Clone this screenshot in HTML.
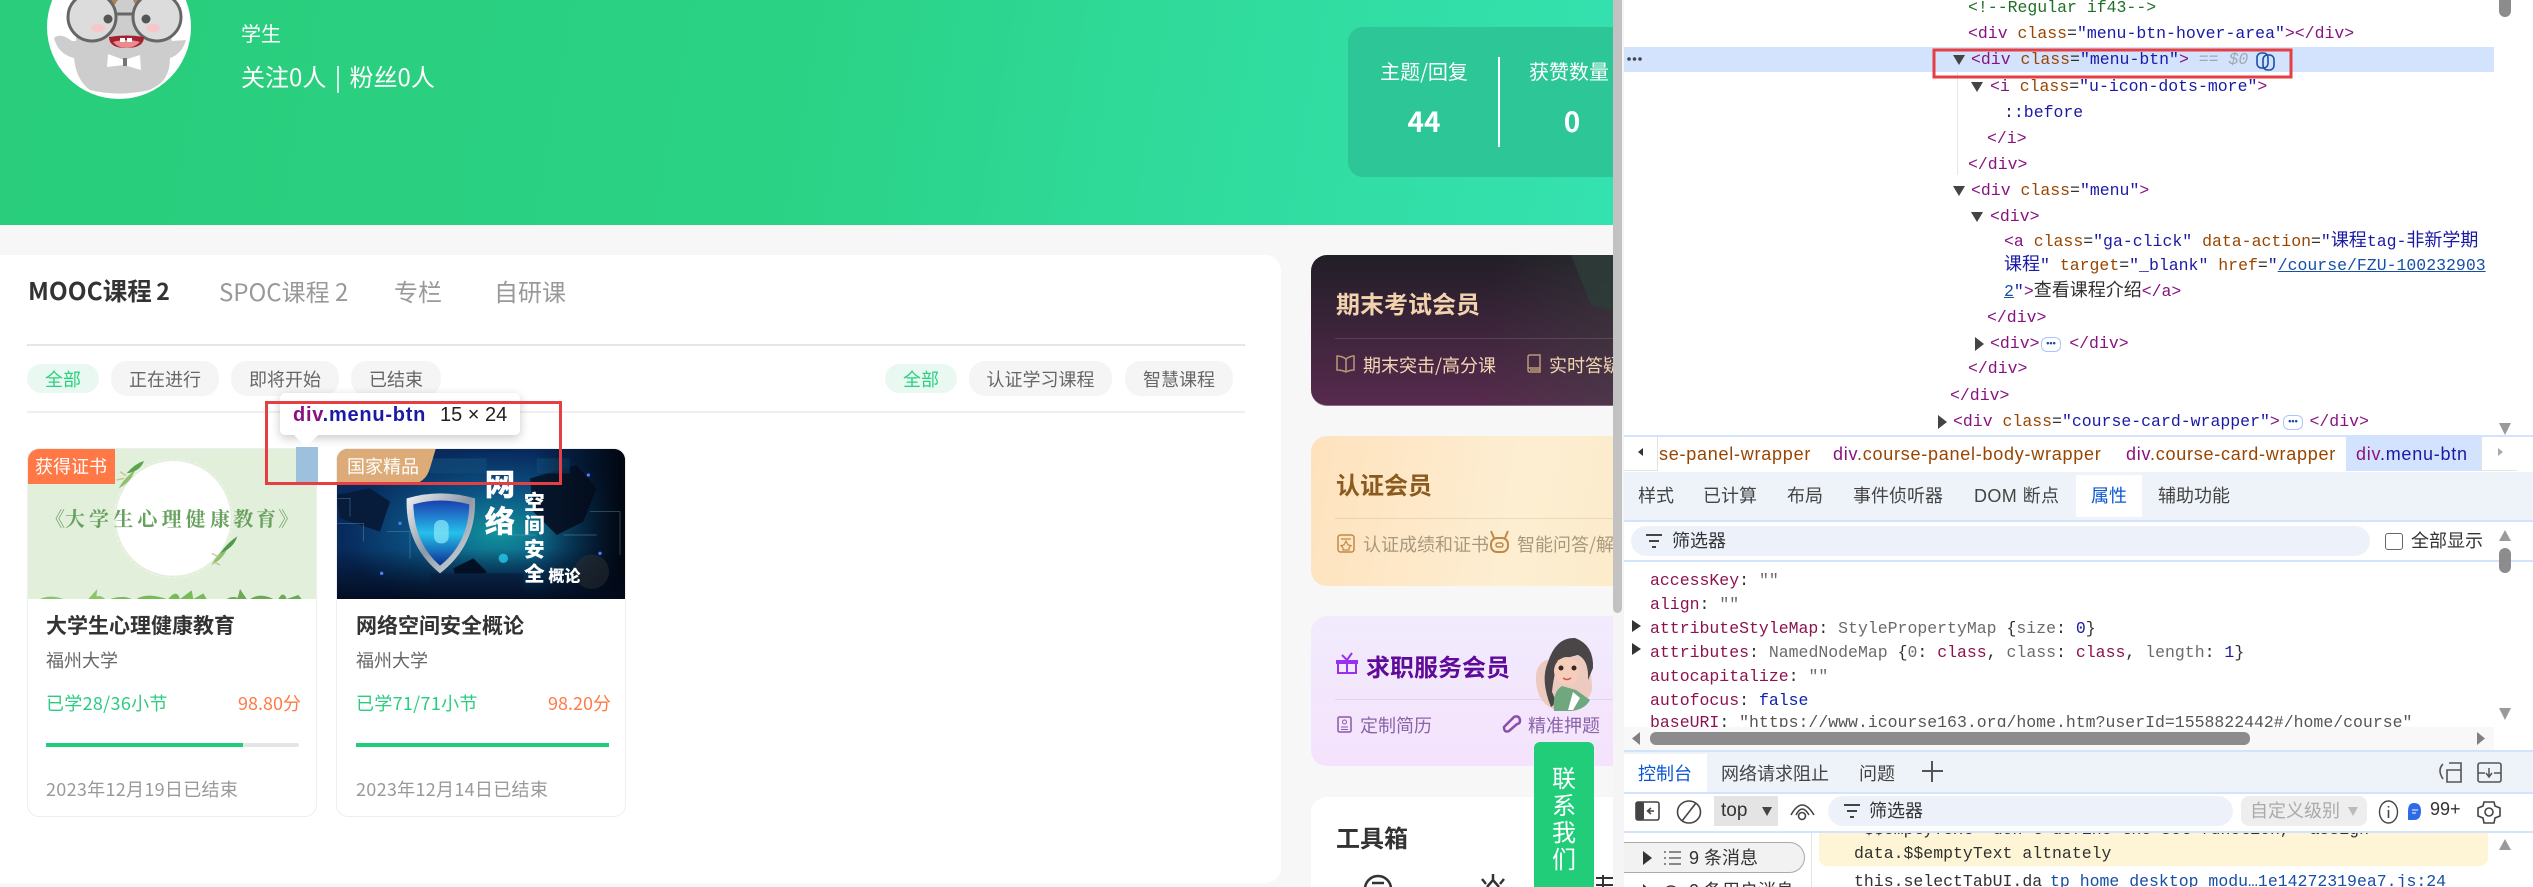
<!DOCTYPE html>
<html lang="zh-CN"><head><meta charset="utf-8"><title>课程</title>
<style>
*{box-sizing:border-box;margin:0;padding:0}
html,body{width:2533px;height:887px;overflow:hidden;background:#fff}
body{position:relative;font-family:"Noto Sans CJK SC","Liberation Sans",sans-serif}
.a{position:absolute}
.t{position:absolute;white-space:nowrap;line-height:1}
.p{position:absolute;display:flex;align-items:center;justify-content:center;font-size:18px;white-space:nowrap;border-radius:16px;background:#f5f5f5;color:#666;height:35px;top:361px}
.p.on{background:#e9f9f2;color:#2ad07f;height:29px;top:364px}
.card{position:absolute;top:448px;width:290px;height:369px;background:#fff;border:1px solid #eee;border-radius:12px;overflow:hidden}
.d{font-family:"Liberation Sans","Noto Sans CJK SC",sans-serif;color:#444}
.m{position:absolute;font-family:"Liberation Mono","Noto Sans CJK SC",monospace;font-size:16.5px;line-height:20px;white-space:pre;color:#303030}
.m i{font-style:normal;color:#881280}
.m b{font-weight:400;color:#994500}
.m u{text-decoration:none;color:#1a1aa6}
.m em{font-style:normal;font-size:18px}
.n{font-style:normal;color:#8b1350}
.g{color:#6b6b6b}
.e{position:absolute;width:20px;height:15px;border:1px solid #a8c7fa;border-radius:6px;background:#fff;color:#174ea6;font:bold 9px/10px "Liberation Sans",sans-serif;text-align:center;letter-spacing:0}
.ln{position:absolute;background:#d3e3fd;height:2px;left:1624px;width:909px}
</style></head><body>

<!-- page area -->
<div class="a" style="left:0;top:0;width:1613px;height:887px;overflow:hidden;background:#f7f7f7">
  <div class="a" style="left:0;top:0;width:1613px;height:225px;background:linear-gradient(100deg,#29cd7b 0%,#2ad284 48%,#31dca0 78%,#34e2b0 100%)"></div>

  <svg class="a" style="left:0;top:0" width="210" height="110" viewBox="0 0 210 110">
    <defs><clipPath id="av"><circle cx="119" cy="27" r="70"/></clipPath></defs>
    <circle cx="119" cy="27" r="72" fill="#fff"/>
    <g clip-path="url(#av)">
      <path d="M54 38Q60 32 72 41L76 41Q80 -6 118 -8Q160 -6 172 41L186 40Q182 54 170 58Q170 82 150 90Q118 97 90 90Q76 80 74 58Q58 54 54 38Z" fill="#cdcdcd"/>
      <path d="M104 -2L113 7L118 0ZM136 6L150 -2L132 -2Z" fill="#a88654"/>
      <circle cx="92" cy="17" r="24" fill="#dcdcdc" stroke="#666" stroke-width="3"/>
      <circle cx="157" cy="17" r="24" fill="#dcdcdc" stroke="#666" stroke-width="3"/>
      <path d="M116 14H133" stroke="#666" stroke-width="3"/>
      <circle cx="108" cy="19" r="4.5" fill="#555"/><circle cx="146" cy="19" r="4.5" fill="#555"/>
      <ellipse cx="98" cy="28" rx="7" ry="4" fill="#f6c6c8"/><ellipse cx="153" cy="28" rx="7" ry="4" fill="#f6c6c8"/>
      <path d="M109 37Q126 34 144 37Q144 48 126 48Q109 48 109 37Z" fill="#a2232f"/>
      <path d="M113 42Q126 38 140 42Q134 48 126 48Q118 48 113 42Z" fill="#ea8b8f"/>
      <rect x="120" y="38" width="5" height="4" fill="#fff"/><rect x="127" y="38" width="5" height="4" fill="#fff"/>
      <path d="M108 54L124 60L140 55L141 70L124 65L107 67Z" fill="#fff"/>
      <rect x="123" y="58" width="4" height="8" fill="#777"/>
    </g>
  </svg>
  <div class="t" style="left:241px;top:23px;font-size:20px;color:#fff">学生</div>
  <div class="t" style="left:241px;top:64px;font-size:24px;color:#fff;word-spacing:3px">关注0人 | 粉丝0人</div>

  <div class="a" style="left:1348px;top:27px;width:300px;height:150px;background:#2dc797;border-radius:15px"></div>
  <div class="t" style="left:1349px;width:150px;top:61px;text-align:center;font-size:20px;color:#fff">主题/回复</div>
  <div class="t" style="left:1349px;width:150px;top:107px;text-align:center;font-size:28px;font-weight:700;color:#fff">44</div>
  <div class="a" style="left:1498px;top:57px;width:2px;height:90px;background:#fff"></div>
  <div class="t" style="left:1529px;top:61px;font-size:20px;color:#fff">获赞数量</div>
  <div class="t" style="left:1500px;width:144px;top:107px;text-align:center;font-size:28px;font-weight:700;color:#fff">0</div>

  <!-- white panel -->
  <div class="a" style="left:0;top:255px;width:1281px;height:628px;background:#fff;border-radius:0 16px 16px 0"></div>
  <div class="t" style="left:28px;top:279px;font-size:24.5px;font-weight:700;color:#333;word-spacing:-1px">MOOC课程 <span style="font-size:23px">2</span></div>
  <div class="t" style="left:219px;top:279px;font-size:24px;color:#999">SPOC课程 2</div>
  <div class="t" style="left:394px;top:279px;font-size:24px;color:#999">专栏</div>
  <div class="t" style="left:494px;top:279px;font-size:24px;color:#999">自研课</div>
  <div class="a" style="left:27px;top:344px;width:1218px;height:1.5px;background:#e6e6e6"></div>
  <div class="a" style="left:27px;top:411px;width:1218px;height:1.5px;background:#efefef"></div>

  <div class="p on" style="left:27px;width:72px">全部</div>
  <div class="p" style="left:111px;width:108px">正在进行</div>
  <div class="p" style="left:231px;width:108px">即将开始</div>
  <div class="p" style="left:351px;width:90px">已结束</div>
  <div class="p on" style="left:885px;width:72px">全部</div>
  <div class="p" style="left:969px;width:143px">认证学习课程</div>
  <div class="p" style="left:1125px;width:108px">智慧课程</div>

  <!-- course card 1 -->
  <div class="card" style="left:27px">
    <svg class="a" style="left:-8px;top:-4px" width="300" height="160" viewBox="0 0 900 480">
      <rect width="900" height="480" fill="#e2efdb"/>
      <circle cx="460" cy="220" r="178" fill="none" stroke="#f4f9f0" stroke-width="2" stroke-dasharray="10 8"/>
      <circle cx="460" cy="220" r="172" fill="#fff"/>
      <text y="243" font-family="Noto Serif CJK SC,serif" font-weight="700" font-size="60" fill="#68a15f" x="75 135 207 280 352 425 497 570 640 708 775">《大学生心理健康教育》</text>
      <g fill="#8fc071">
        <path d="M296 130Q312 100 345 75Q335 110 296 130Z"/>
        <path d="M574 360Q590 330 625 300Q615 340 574 360Z"/>
        <path d="M320 85Q345 55 372 48Q360 80 320 85Z" fill="#5aa550"/>
        <path d="M600 325Q625 290 652 274Q640 310 600 325Z" fill="#4f9a4a"/>
      </g>
      <path d="M312 100L290 105M318 92L300 80M580 350L600 360M595 335L575 325" stroke="#c0c68a" stroke-width="4"/>
      <g fill="#8cc46a">
        <path d="M60 462Q90 448 130 462ZM205 462L232 432L228 462ZM205 462Q240 445 255 462Z"/>
        <path d="M270 462Q310 450 335 462ZM350 462Q380 442 440 462ZM445 462Q470 430 480 462L515 436L520 462L550 445L560 462Z" fill="#76bb55"/>
        <path d="M620 462Q640 450 660 462ZM652 462L660 432L680 462ZM690 462Q720 442 760 462ZM775 462Q790 435 800 462L835 450L845 462Z" fill="#6aaa55"/>
      </g>
      <rect y="462" width="900" height="18" fill="#fff"/>
    </svg>
    <div class="a" style="left:0;top:0;width:87px;height:35px;background:#ff7845;color:#fff;font-size:18px;line-height:34px;padding-left:7px">获得证书</div>
    <div class="t" style="left:18px;top:166px;font-size:21px;font-weight:700;color:#333">大学生心理健康教育</div>
    <div class="t" style="left:18px;top:202px;font-size:18px;color:#666">福州大学</div>
    <div class="t" style="left:18px;top:245px;font-size:18px;color:#2acd7e;letter-spacing:.3px">已学28/36小节</div>
    <div class="t" style="right:15px;top:245px;font-size:18px;color:#ff7a45">98.80分</div>
    <div class="a" style="left:18px;top:294px;width:253px;height:4px;background:#e5e5e5;border-radius:2px"></div>
    <div class="a" style="left:18px;top:294px;width:197px;height:4px;background:#22cd7a"></div>
    <div class="t" style="left:18px;top:331px;font-size:18px;color:#999;letter-spacing:.3px">2023年12月19日已结束</div>
  </div>

  <!-- course card 2 -->
  <div class="card" style="left:336px">
    <svg class="a" style="left:-7px;top:-4px" width="300" height="160" viewBox="0 0 900 480">
      <defs>
        <radialGradient id="gg" cx="56%" cy="55%" r="52%"><stop offset="0" stop-color="#12939c"/><stop offset=".5" stop-color="#0b5484"/><stop offset="1" stop-color="#082a5c"/></radialGradient>
        <linearGradient id="sh" x1="0" x2="0" y1="0" y2="1"><stop offset="0" stop-color="#1a3fb0"/><stop offset=".5" stop-color="#26c0ec"/><stop offset="1" stop-color="#0b2f92"/></linearGradient>
        <linearGradient id="sil" x1="0" x2="1" y1="0" y2="1"><stop offset="0" stop-color="#f2f4f6"/><stop offset=".5" stop-color="#8d98a6"/><stop offset="1" stop-color="#e6eaee"/></linearGradient>
        <linearGradient id="fade" x1="0" x2="1" y1="0" y2="0"><stop offset=".68" stop-color="#020812" stop-opacity="0"/><stop offset=".97" stop-color="#020812"/></linearGradient>
        <linearGradient id="fb" x1="0" x2="0" y1="0" y2="1"><stop offset=".65" stop-color="#020812" stop-opacity="0"/><stop offset="1" stop-color="#020a1e"/></linearGradient>
      </defs>
      <rect width="900" height="480" fill="url(#gg)"/>
      <path d="M20 150L120 130L180 170L150 260L90 240L30 220Z" fill="#071c3a"/>
      <path d="M600 100L740 60L800 130L760 230L680 270L610 200Z" fill="#07182f"/>
      <path d="M370 370L430 340L470 380L440 420L380 410Z" fill="#05142a"/>
      <path d="M300 40H470V85H300ZM620 40H720V85H620Z" fill="#114a78" opacity=".7"/>
      <rect x="300" y="385" width="280" height="75" fill="#0e3768"/>
      <rect width="900" height="480" fill="url(#fade)"/><rect width="900" height="480" fill="url(#fb)"/>
      <path d="M22 235H100V290M170 260H240V340M780 200H870V330M540 270H620M22 160H60V215M700 270H800" fill="none" stroke="#6a9dbd" stroke-width="2" opacity=".6"/>
      <circle cx="520" cy="340" r="14" fill="#25c8ee" opacity=".8"/>
      <circle cx="775" cy="90" r="5" fill="#4c7cff"/><circle cx="810" cy="325" r="5" fill="#4c7cff"/><circle cx="210" cy="235" r="5" fill="#4c7cff"/><circle cx="155" cy="385" r="5" fill="#4c7cff"/>
      <path d="M230 160Q330 130 435 160Q440 300 330 385Q225 300 230 160Z" fill="url(#sil)"/>
      <path d="M250 178Q330 155 418 178Q415 295 330 362Q252 295 250 178Z" fill="url(#sh)"/>
      <rect x="312" y="225" width="44" height="70" rx="20" fill="#86e6f7" opacity=".75"/>
      <circle cx="785" cy="380" r="52" fill="#333" opacity=".45"/>
      <g font-family="Noto Sans CJK SC,sans-serif" font-weight="900" fill="#fff">
        <text x="464" y="152" font-size="92">网</text>
        <text x="464" y="262" font-size="92">络</text>
        <text x="582" y="194" font-size="62">空</text>
        <text x="582" y="262" font-size="62">间</text>
        <text x="582" y="335" font-size="62">安</text>
        <text x="582" y="408" font-size="62">全</text>
        <text x="655" y="410" font-size="48">概论</text>
      </g>
      <rect y="462" width="900" height="18" fill="#fff"/>
    </svg>
    <svg class="a" style="left:0;top:-1px" width="110" height="40"><path d="M0 0H99L93 20Q89 34 76 36H0Z" fill="#dcab78"/></svg>
    <div class="t" style="left:10px;top:8px;font-size:18px;color:#fff">国家精品</div>
    <div class="t" style="left:19px;top:166px;font-size:21px;font-weight:700;color:#333">网络空间安全概论</div>
    <div class="t" style="left:19px;top:202px;font-size:18px;color:#666">福州大学</div>
    <div class="t" style="left:19px;top:245px;font-size:18px;color:#2acd7e;letter-spacing:.3px">已学71/71小节</div>
    <div class="t" style="right:14px;top:245px;font-size:18px;color:#ff7a45">98.20分</div>
    <div class="a" style="left:19px;top:294px;width:253px;height:4px;background:#22cd7a"></div>
    <div class="t" style="left:19px;top:331px;font-size:18px;color:#999;letter-spacing:.3px">2023年12月14日已结束</div>
  </div>

  <!-- inspector overlay -->
  <div class="a" style="left:296px;top:447px;width:22px;height:36px;background:#9dc1dc"></div>
  <div class="a" style="left:280px;top:393px;width:240px;height:42px;background:#fff;border-radius:5px;box-shadow:0 3px 10px rgba(0,0,0,.22)"></div>
  <svg class="a" style="left:294px;top:434px" width="26" height="14"><path d="M0 1H24L12 13Z" fill="#fff"/></svg>
  <div class="t d" style="left:293px;top:405px;font-size:20px;font-weight:700;color:#1a1aa6;line-height:20px;letter-spacing:.75px"><span style="color:#881280">div</span>.menu-btn</div>
  <div class="t d" style="left:440px;top:405px;font-size:20px;color:#222;line-height:20px">15 × 24</div>
  <div class="a" style="left:265px;top:401px;width:297px;height:84px;border:3px solid #e63f43"></div>

  <!-- right column -->
  <div class="a" style="left:1311px;top:255px;width:340px;height:151px;border-radius:16px;background:linear-gradient(180deg,#211e27,#582a4e);border-bottom:1px solid #8a6a88;overflow:hidden">
    <div class="a" style="left:0;top:0;width:340px;height:151px;background:linear-gradient(100deg,rgba(60,70,60,0) 50%,rgba(60,75,65,.45) 100%)"></div>
    <svg class="a" style="left:260px;top:0" width="60" height="60"><path d="M0 0H60V60L20 50Z" fill="#2d3d38" opacity=".8"/></svg>
  </div>
  <div class="t" style="left:1336px;top:291px;font-size:24px;font-weight:700;color:#f3d3ad">期末考试会员</div>
  <div class="a" style="left:1335px;top:338px;width:280px;height:1px;background:rgba(255,255,255,.12)"></div>
  <div class="t" style="left:1363px;top:356px;font-size:18px;color:#f2d7b3">期末突击/高分课</div>
  <div class="t" style="left:1549px;top:356px;font-size:18px;color:#f2d7b3">实时答疑</div>

  <div class="a" style="left:1311px;top:436px;width:340px;height:150px;border-radius:16px;background:linear-gradient(100deg,#fee2bd,#fdeed2 60%,#fcebc9)"></div>
  <div class="t" style="left:1336px;top:472px;font-size:24px;font-weight:700;color:#8a5a1e">认证会员</div>
  <div class="a" style="left:1335px;top:518px;width:280px;height:1px;background:rgba(150,110,60,.16)"></div>
  <div class="t" style="left:1363px;top:535px;font-size:18px;color:#a8987e">认证成绩和证书</div>
  <div class="t" style="left:1517px;top:535px;font-size:18px;color:#a8987e">智能问答/解析</div>

  <div class="a" style="left:1311px;top:616px;width:340px;height:150px;border-radius:16px;background:linear-gradient(180deg,#f1ebfd,#f5e2fc)"></div>
  <div class="t" style="left:1366px;top:654px;font-size:24px;font-weight:700;color:#5f0a99">求职服务会员</div>
  <div class="a" style="left:1335px;top:699px;width:280px;height:1px;background:#e2d3ef"></div>
  <div class="t" style="left:1360px;top:716px;font-size:18px;color:#8a63a8">定制简历</div>
  <div class="t" style="left:1528px;top:716px;font-size:18px;color:#8a63a8">精准押题</div>

  <div class="a" style="left:1311px;top:797px;width:340px;height:120px;border-radius:16px;background:#fff"></div>
  <div class="t" style="left:1336px;top:825px;font-size:24px;font-weight:700;color:#333">工具箱</div>

  <svg class="a" style="left:0;top:0" width="1613" height="887" fill="none">
    <!-- book -->
    <path d="M1346 359Q1342 356 1337 356V370Q1342 370 1346 372Q1350 370 1354 370V356Q1350 356 1346 359ZM1346 359V372" stroke="#b89a78" stroke-width="1.5"/>
    <path d="M1528 370V357Q1528 355 1530 355H1540V372H1530Q1528 372 1528 370ZM1528 368H1540M1530 370H1540" stroke="#b89a78" stroke-width="1.5"/>
    <!-- cert -->
    <rect x="1338" y="535" width="16" height="17" rx="2.5" stroke="#c08a45" stroke-width="1.5"/>
    <path d="M1341 539H1351M1346 541L1348 545L1351 545.500L1349 548V550H1343V548L1341 545.500L1344 545Z" stroke="#c08a45" stroke-width="1.2"/>
    <!-- robot -->
    <rect x="1491" y="538" width="17" height="14" rx="6" stroke="#c08a45" stroke-width="2"/>
    <rect x="1496" y="543" width="7" height="4" rx="2" stroke="#c08a45" stroke-width="1.5"/>
    <path d="M1494 538L1491 531M1505 538L1508 531" stroke="#c08a45" stroke-width="2"/>
    <!-- gift -->
    <path d="M1337 661H1357V663H1337ZM1338 663V673H1356V663M1347 663V673M1342 655L1347 660L1352 653" stroke="#9a2ff0" stroke-width="2"/>
    <!-- resume -->
    <rect x="1338" y="717" width="13" height="15" rx="1.500" stroke="#8a5aa8" stroke-width="1.5"/>
    <circle cx="1344.500" cy="722" r="2" stroke="#8a5aa8"/><path d="M1341 727H1348M1341 729.500H1348" stroke="#8a5aa8"/>
    <!-- scroll -->
    <path d="M1504 727L1514 717Q1519 715 1520 720Q1520 724 1517 724L1509 731Q1504 733 1504 727Z" stroke="#8a50a8" stroke-width="2.5"/>
    <!-- tools icons -->
    <circle cx="1378" cy="889" r="13" stroke="#333" stroke-width="2.5"/><path d="M1372 883H1384" stroke="#333" stroke-width="2.5"/>
    <path d="M1493 874V881M1482 879L1486 884M1504 879L1500 884M1487 887L1493 880L1499 887" stroke="#333" stroke-width="2.5"/>
    <path d="M1596 878H1613M1596 885H1613M1603 875V887" stroke="#333" stroke-width="2"/>
    <!-- girl -->
    <path d="M1546 660Q1535 665 1536 680Q1537 706 1560 711Q1585 712 1592 690Q1592 670 1585 655Z" fill="#eccac0"/>
    <path d="M1548 662Q1556 637 1575 638Q1594 645 1593 668L1588 680Q1589 660 1578 655L1558 660Q1553 680 1552 692Q1558 703 1551 707Q1540 680 1548 662Z" fill="#4a4546"/>
    <ellipse cx="1567" cy="671" rx="13" ry="14" fill="#f5cdbb"/>
    <circle cx="1561" cy="668" r="2.500" fill="#3a2622"/><circle cx="1574" cy="668" r="2.500" fill="#3a2622"/>
    <path d="M1563 678Q1567 681 1571 678" stroke="#d4545a" stroke-width="1.5"/>
    <path d="M1554 711Q1552 692 1562 686L1576 690L1590 700Q1584 711 1568 711Z" fill="#6fa87f"/>
    <path d="M1573 692L1580 698L1573 710H1568Z" fill="#fff"/>
  </svg>

  <div class="a" style="left:1534px;top:742px;width:60px;height:160px;background:#22cd7a;border-radius:6px"></div>
  <div class="a" style="left:1534px;top:763px;width:60px;text-align:center;color:#fff;font-size:24px;line-height:27px;font-family:'Noto Sans CJK SC',sans-serif">联<br>系<br>我<br>们</div>
</div>

<!-- page scrollbar -->
<div class="a" style="left:1613px;top:0;width:11px;height:887px;background:#f5f5f5"></div>
<div class="a" style="left:1613px;top:0;width:9px;height:613px;background:#c2c2c2;border-radius:0 0 5px 5px"></div>

<!-- devtools -->
<div class="a" style="left:1624px;top:0;width:909px;height:887px;background:#fff;overflow:hidden"></div>
<div class="a" style="left:1624px;top:47px;width:870px;height:25px;background:#d3e3fd"></div>
<div class="a" style="left:1957px;top:72px;width:1px;height:103px;background:#dfe7f3"></div>

<div class="m" style="left:1968px;top:-2px;color:#236e25">&lt;!--Regular if43--&gt;</div>
<div class="m" style="left:1968px;top:24px"><i>&lt;div</i> <b>class</b>=<u>"menu-btn-hover-area"</u><i>&gt;&lt;/div&gt;</i></div>
<div class="m" style="left:1971px;top:50px"><i>&lt;div</i> <b>class</b>=<u>"menu-btn"</u><i>&gt;</i> <span style="color:#a0a8b4;font-style:italic">== $0</span></div>
<div class="m" style="left:1990px;top:77px"><i>&lt;i</i> <b>class</b>=<u>"u-icon-dots-more"</u><i>&gt;</i></div>
<div class="m" style="left:2004px;top:103px;color:#1a1aa6">::before</div>
<div class="m" style="left:1987px;top:129px"><i>&lt;/i&gt;</i></div>
<div class="m" style="left:1968px;top:155px"><i>&lt;/div&gt;</i></div>
<div class="m" style="left:1971px;top:181px"><i>&lt;div</i> <b>class</b>=<u>"menu"</u><i>&gt;</i></div>
<div class="m" style="left:1990px;top:207px"><i>&lt;div&gt;</i></div>
<div class="m" style="left:2004px;top:232px"><i>&lt;a</i> <b>class</b>=<u>"ga-click"</u> <b>data-action</b>=<u>"<em>课程</em>tag-<em>非新学期</em></u></div>
<div class="m" style="left:2004px;top:256px"><u><em>课程</em>"</u> <b>target</b>=<u>"_blank"</u> <b>href</b>=<u>"</u><span style="color:#174ea6;text-decoration:underline">/course/FZU-100232903</span></div>
<div class="m" style="left:2004px;top:282px"><span style="color:#174ea6;text-decoration:underline">2</span><u>"</u><i>&gt;</i><em>查看课程介绍</em><i>&lt;/a&gt;</i></div>
<div class="m" style="left:1987px;top:308px"><i>&lt;/div&gt;</i></div>
<div class="m" style="left:1990px;top:334px"><i>&lt;div&gt;</i>   <i>&lt;/div&gt;</i></div>
<div class="e" style="left:2041px;top:337px">•••</div>
<div class="m" style="left:1968px;top:359px"><i>&lt;/div&gt;</i></div>
<div class="m" style="left:1950px;top:386px"><i>&lt;/div&gt;</i></div>
<div class="m" style="left:1953px;top:412px"><i>&lt;div</i> <b>class</b>=<u>"course-card-wrapper"</u><i>&gt;</i>   <i>&lt;/div&gt;</i></div>
<div class="e" style="left:2283px;top:415px">•••</div>

<!-- breadcrumb -->
<div class="ln" style="top:435px"></div>
<div class="a" style="left:2346px;top:437px;width:135px;height:34px;background:#d3e3fd"></div>
<div class="a" style="left:1624px;top:437px;width:34px;height:34px;border-right:1px solid #e3e3e3;border-bottom:1px solid #e3e3e3"></div>
<div class="a" style="left:2481px;top:437px;width:36px;height:34px;border-left:1px solid #e3e3e3;border-bottom:1px solid #e3e3e3"></div>
<div class="t d" style="left:1659px;top:444px;font-size:18px;line-height:20px;letter-spacing:.75px;color:#994500">se-panel-wrapper</div>
<div class="t d" style="left:1833px;top:444px;font-size:18px;line-height:20px;letter-spacing:.75px;color:#994500"><span style="color:#881280">div</span>.course-panel-body-wrapper</div>
<div class="t d" style="left:2126px;top:444px;font-size:18px;line-height:20px;letter-spacing:.75px;color:#994500"><span style="color:#881280">div</span>.course-card-wrapper</div>
<div class="t d" style="left:2356px;top:444px;font-size:18px;line-height:20px;letter-spacing:.75px;color:#1a1aa6"><span style="color:#881280">div</span>.menu-btn</div>

<!-- sub tabs -->
<div class="a" style="left:1624px;top:472px;width:909px;height:48px;background:#eef3fa"></div>
<div class="a" style="left:2076px;top:475px;width:66px;height:42px;background:#fff"></div>
<div class="ln" style="top:520px"></div>
<div class="t d" style="left:1638px;top:487px;font-size:18px">样式</div>
<div class="t d" style="left:1703px;top:487px;font-size:18px">已计算</div>
<div class="t d" style="left:1787px;top:487px;font-size:18px">布局</div>
<div class="t d" style="left:1853px;top:487px;font-size:18px">事件侦听器</div>
<div class="t d" style="left:1974px;top:487px;font-size:18px;letter-spacing:.4px">DOM 断点</div>
<div class="t d" style="left:2091px;top:487px;font-size:18px;color:#0b57d0">属性</div>
<div class="t d" style="left:2158px;top:487px;font-size:18px">辅助功能</div>

<!-- filter -->
<div class="a" style="left:1631px;top:526px;width:739px;height:30px;background:#edf2fa;border-radius:15px"></div>
<div class="t d" style="left:1672px;top:532px;font-size:18px;color:#333">筛选器</div>
<div class="a" style="left:2385px;top:533px;width:18px;height:17px;border:1.5px solid #666;border-radius:3px"></div>
<div class="t d" style="left:2411px;top:532px;font-size:18px;color:#333">全部显示</div>
<div class="ln" style="top:560px"></div>

<!-- props -->
<div class="a" style="left:1624px;top:562px;width:870px;height:165px;overflow:hidden">
  <div class="m" style="left:26px;top:9px"><span class="n">accessKey</span>: <span class="g">""</span></div>
  <div class="m" style="left:26px;top:33px"><span class="n">align</span>: <span class="g">""</span></div>
  <div class="m" style="left:26px;top:57px"><span class="n">attributeStyleMap</span>: <span class="g">StylePropertyMap</span> {<span class="g">size</span>: <span style="color:#1a1aa6">0</span>}</div>
  <div class="m" style="left:26px;top:81px"><span class="n">attributes</span>: <span class="g">NamedNodeMap</span> {<span class="g">0</span>: <span class="n">class</span>, <span class="g">class</span>: <span class="n">class</span>, <span class="g">length</span>: <span style="color:#1a1aa6">1</span>}</div>
  <div class="m" style="left:26px;top:105px"><span class="n">autocapitalize</span>: <span class="g">""</span></div>
  <div class="m" style="left:26px;top:129px"><span class="n">autofocus</span>: <span style="color:#0d22aa">false</span></div>
  <div class="m" style="left:26px;top:151px"><span class="n">baseURI</span>: <span style="color:#555">"https://www.icourse163.org/home.htm?userId=1558822442#/home/course"</span></div>
</div>
<div class="a" style="left:1624px;top:727px;width:870px;height:23px;background:#f8f8f8"></div>
<div class="a" style="left:1650px;top:732px;width:600px;height:13px;background:#8c8c8c;border-radius:6px"></div>
<div class="a" style="left:2499px;top:548px;width:12px;height:25px;background:#8c8c8c;border-radius:6px"></div>
<div class="a" style="left:2499px;top:0;width:12px;height:17px;background:#8c8c8c;border-radius:0 0 6px 6px"></div>
<div class="ln" style="top:750px"></div>

<!-- drawer tabs -->
<div class="a" style="left:1624px;top:752px;width:909px;height:40px;background:#eef3fa"></div>
<div class="a" style="left:1624px;top:754px;width:83px;height:38px;background:#fff"></div>
<div class="ln" style="top:792px"></div>
<div class="t d" style="left:1638px;top:765px;font-size:18px;color:#0b57d0">控制台</div>
<div class="t d" style="left:1721px;top:765px;font-size:18px">网络请求阻止</div>
<div class="t d" style="left:1859px;top:765px;font-size:18px">问题</div>

<!-- console toolbar -->
<div class="a" style="left:1714px;top:796px;width:64px;height:30px;background:#e4e4e4"></div>
<div class="t d" style="left:1721px;top:801px;font-size:19px;line-height:20px;color:#333">top</div>
<div class="a" style="left:1828px;top:796px;width:405px;height:30px;background:#edf2fa;border-radius:15px"></div>
<div class="t d" style="left:1869px;top:802px;font-size:18px;color:#333">筛选器</div>
<div class="a" style="left:2241px;top:796px;width:126px;height:30px;background:#eee;border-radius:8px"></div>
<div class="t d" style="left:2250px;top:802px;font-size:18px;color:#aaa">自定义级别</div>
<div class="t d" style="left:2430px;top:799px;font-size:18px;line-height:20px;color:#333">99+</div>
<div class="ln" style="top:831px"></div>

<!-- console body -->
<div class="a" style="left:1624px;top:842px;width:181px;height:31px;background:#f2f2f2;border:1.5px solid #aaa;border-left:0;border-radius:0 16px 16px 0"></div>
<div class="t d" style="left:1689px;top:848px;font-size:18px;line-height:20px;color:#333">9 条消息</div>
<div class="t d" style="left:1689px;top:881px;font-size:18px;line-height:20px;color:#333">0 条用户消息</div>
<div class="a" style="left:1811px;top:833px;width:1px;height:54px;background:#e3e3e3"></div>
<div class="a" style="left:1819px;top:833px;width:669px;height:33px;background:#fdf5d6;border-radius:0 0 8px 8px;overflow:hidden">
  <div class="m" style="left:45px;top:-13px">$$emptyText" don't define the set function, "assign</div>
  <div class="m" style="left:35px;top:11px">data.$$emptyText altnately</div>
</div>
<div class="m" style="left:1854px;top:872px">this.selectTabUI.da</div>
<div class="m" style="left:2050px;top:872px;color:#174ea6;text-decoration:underline">tp_home_desktop_modu…1e14272319ea7.js:24</div>

<!-- devtools icons -->
<svg class="a" style="left:0;top:0" width="2533" height="887" fill="none">
  <g fill="#444">
    <circle cx="1629" cy="59" r="1.800"/><circle cx="1634.500" cy="59" r="1.800"/><circle cx="1640" cy="59" r="1.800"/>
    <path d="M1953 55H1965L1959 65ZM1971 82H1983L1977 92ZM1953 186H1965L1959 196ZM1971 212H1983L1977 222ZM1975 337L1984 344L1975 351ZM1938 415L1947 422L1938 429Z"/>
    <path d="M1643 448L1638 452L1643 456Z" fill="#333"/>
    <path d="M1632 620L1641 626L1632 632ZM1632 643L1641 649L1632 655Z" fill="#333"/>
  </g>
  <g fill="#9a9a9a">
    <path d="M2499 423H2511L2505 435ZM2499 541H2511L2505 530ZM2499 708H2511L2505 720ZM2499 850H2511L2505 839Z"/>
    <path d="M1640 732L1632 738.500L1640 745ZM2477 732L2485 738.500L2477 745Z" fill="#808080"/>
    <path d="M2498 448L2503 452L2498 456Z" fill="#aaa"/>
    <path d="M2348 807H2358L2353 816Z" fill="#bbb"/>
  </g>
  <g stroke="#1a4fa8" stroke-width="1.600">
    <rect x="2257" y="53" width="11" height="15" rx="4.500"/><rect x="2263" y="55" width="11" height="15" rx="4.500"/>
  </g>
  <!-- filter icons -->
  <path d="M1646 535H1662M1649 541H1659M1652 547H1656" stroke="#444" stroke-width="2"/>
  <path d="M1844 805H1860M1847 811H1857M1850 817H1854" stroke="#444" stroke-width="2"/>
  <!-- plus -->
  <path d="M1932 761V782M1922 771H1943" stroke="#555" stroke-width="2"/>
  <!-- dock icons -->
  <path d="M2449 763H2461V782H2447V770H2461M2443 764Q2437 770 2443 779" stroke="#555" stroke-width="1.600"/>
  <rect x="2478" y="763" width="23" height="19" rx="2" stroke="#555" stroke-width="1.600"/>
  <path d="M2478 773H2485M2494 773H2501M2489 768V776M2486 773L2489 777L2492 773" stroke="#555" stroke-width="1.500"/>
  <!-- sidebar toggle -->
  <rect x="1636" y="802" width="23" height="18" rx="2" fill="#fff" stroke="#444" stroke-width="1.600"/>
  <rect x="1636" y="802" width="8" height="18" rx="2" fill="#444"/>
  <path d="M1654 811H1648M1651 808L1647.500 811L1651 814" stroke="#444" stroke-width="1.500"/>
  <!-- block -->
  <ellipse cx="1689" cy="812" rx="11.500" ry="11" stroke="#444" stroke-width="1.600"/>
  <path d="M1696 803L1682 821" stroke="#444" stroke-width="1.600"/>
  <path d="M1762 807H1772L1767 816Z" fill="#444"/>
  <!-- eye -->
  <path d="M1791 815Q1802 795 1814 815M1796 815Q1802 803 1809 815" stroke="#444" stroke-width="1.600"/>
  <circle cx="1802" cy="816" r="3.500" stroke="#444" stroke-width="1.600"/>
  <!-- info -->
  <ellipse cx="2388.500" cy="812" rx="9" ry="11" stroke="#444" stroke-width="1.400"/>
  <path d="M2388.500 810V818M2388.500 806V807.500" stroke="#444" stroke-width="1.600"/>
  <!-- msg -->
  <path d="M2414 803Q2421 803 2421 811Q2421 820 2414 820H2408L2408 811Q2408 803 2414 803Z" fill="#2f6ae8"/>
  <path d="M2412 810H2418M2412 813H2416" stroke="#fff"/>
  <!-- gear -->
  <circle cx="2489" cy="812" r="4" stroke="#444" stroke-width="1.600"/>
  <path d="M2484 802H2494L2495 806L2500 808V816L2495 818L2494 823H2484L2483 818L2478 816V808L2483 806Z" stroke="#444" stroke-width="1.600"/>
  <!-- list -->
  <path d="M1643 851L1652 858L1643 865Z" fill="#333"/>
  <path d="M1669 852H1681M1669 858H1681M1669 864H1681M1664 852H1666M1664 858H1666M1664 864H1666" stroke="#666" stroke-width="1.500"/>
  <path d="M1643 884L1650 890L1643 896Z" fill="#333"/>
  <circle cx="1671" cy="893" r="7" stroke="#444" stroke-width="1.500"/>
  <!-- red selection box -->
  <rect x="1934" y="50" width="357" height="27" stroke="#e63f43" stroke-width="3"/>
</svg>
</body></html>
